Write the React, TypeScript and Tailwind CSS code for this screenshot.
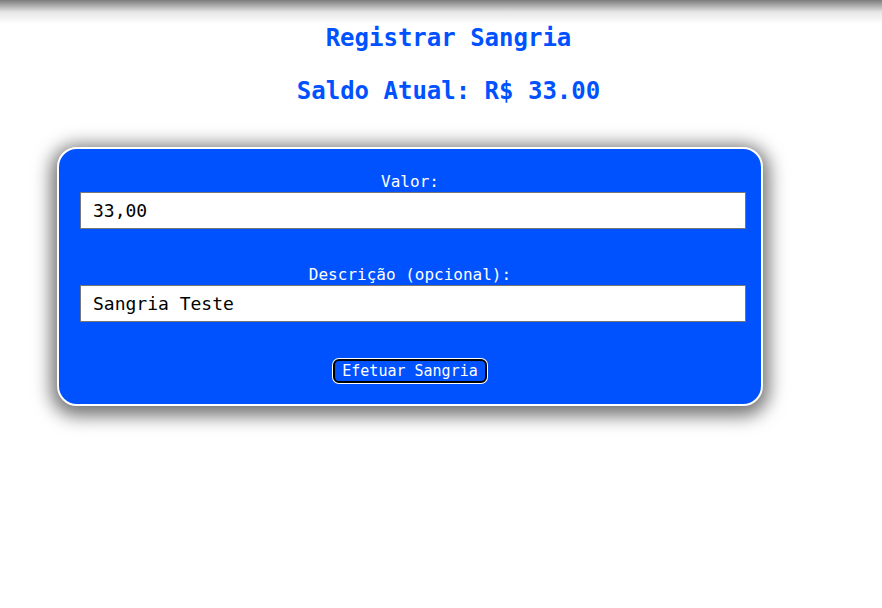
export default function App() {
  return (
    <div className="min-h-screen bg-white font-['DejaVu_Sans_Mono',monospace]">
      <div className="h-[24px] bg-gradient-to-b from-[#7c7c7c] via-[#e6e6e6] to-white" />
      <h1 className="pl-[15px] text-center text-[24px] font-bold leading-[28px] text-[#0052ff]">
        Registrar Sangria
      </h1>
      <h2 className="mt-[25px] pl-[15px] text-center text-[24px] font-bold leading-[28px] text-[#0052ff]">
        Saldo Atual: R$ 33.00
      </h2>
      <div className="ml-[57px] mt-[42px] w-[706px] rounded-[20px] border-2 border-white bg-[#0052ff] pl-[21px] pr-[15px] pb-[21px] pt-[23px] shadow-[0_4px_18px_6px_rgba(0,0,0,0.55)]">
        <div className="flex flex-col">
          <label className="-translate-x-[3px] text-center text-[16px] leading-[19px] text-white">Valor:</label>
          <input
            defaultValue="33,00"
            className="mt-[1px] h-[37px] w-full border border-[#767676] bg-white px-[12px] text-[18px] text-black outline-none"
          />
        </div>
        <div className="mt-[36px] flex flex-col">
          <label className="-translate-x-[3px] text-center text-[16px] leading-[19px] text-white">Descrição (opcional):</label>
          <input
            defaultValue="Sangria Teste"
            className="mt-[1px] h-[37px] w-full border border-[#767676] bg-white px-[12px] text-[18px] text-black outline-none"
          />
        </div>
        <div className="mt-[37px] flex justify-center">
          <button className="h-[24px] w-[154px] -translate-x-[3px] rounded-[6px] border-2 border-black bg-[#0052ff] text-[15px] leading-[18px] text-white ring-1 ring-white">
            Efetuar Sangria
          </button>
        </div>
      </div>
    </div>
  );
}
